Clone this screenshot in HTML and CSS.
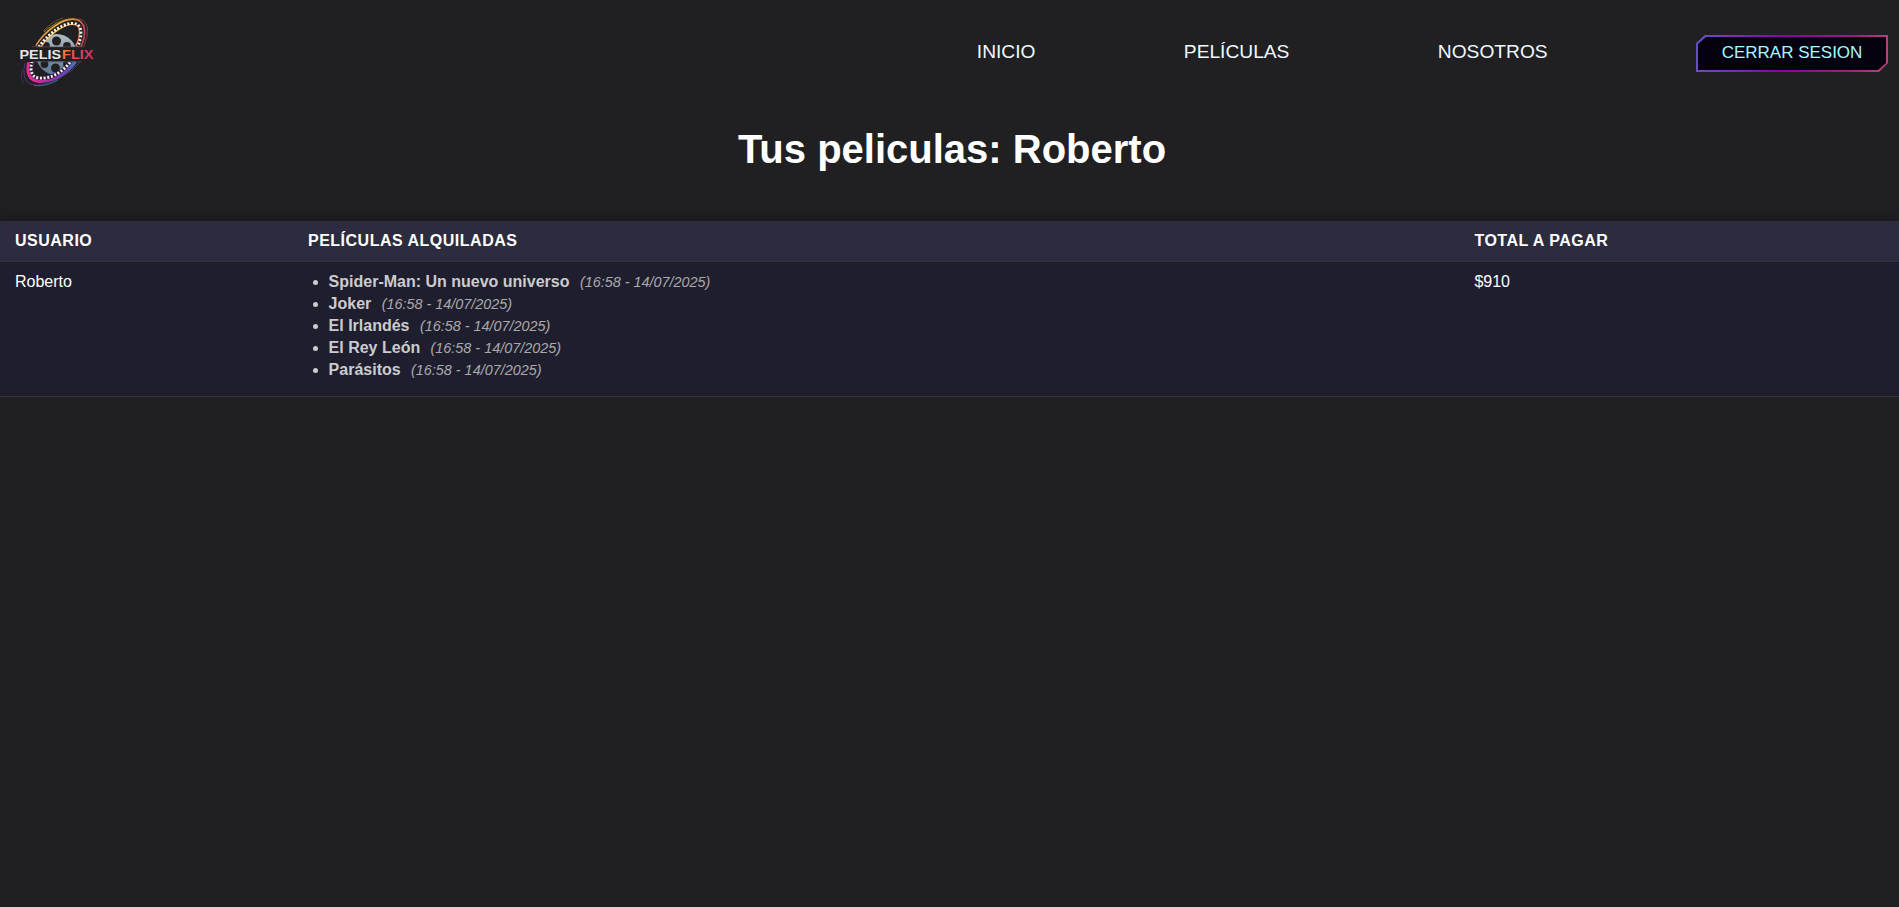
FILE: index.html
```html
<!DOCTYPE html>
<html lang="es">
<head>
<meta charset="utf-8">
<title>Pelisflix</title>
<link rel="stylesheet" href="styles.css">
</head>
<body>
<header class="header">
  <a class="logo" href="#">
    <svg class="logo-img" viewBox="0 0 100 85" width="100" height="85">
      <defs>
        <linearGradient id="top" gradientUnits="userSpaceOnUse" x1="24" y1="30" x2="75" y2="34"><stop offset="0" stop-color="#e58a62"/><stop offset=".4" stop-color="#f5c13a"/><stop offset=".8" stop-color="#f2803a"/><stop offset="1" stop-color="#e0407a"/></linearGradient>
        <linearGradient id="bot" gradientUnits="userSpaceOnUse" x1="18" y1="60" x2="72" y2="55"><stop offset="0" stop-color="#e62d92"/><stop offset=".45" stop-color="#8d2fae"/><stop offset=".75" stop-color="#5a50b4"/><stop offset="1" stop-color="#2f9fc4"/></linearGradient>
        <linearGradient id="flix" x1="0" y1="0" x2="1" y2="0.300"><stop offset="0" stop-color="#f4983c"/><stop offset=".45" stop-color="#ec4f58"/><stop offset="1" stop-color="#d92a62"/></linearGradient>
        <linearGradient id="metal" x1="0" y1="0" x2="0" y2="1"><stop offset="0" stop-color="#b3bac0"/><stop offset=".5" stop-color="#8496a8"/><stop offset="1" stop-color="#58759c"/></linearGradient>
        <clipPath id="upper"><path d="M0 0H100V36.500H0z"/></clipPath>
        <clipPath id="lower"><path d="M0 52H100V85H0z"/></clipPath>
      </defs>
      <circle cx="46.500" cy="44.500" r="20.500" fill="url(#metal)"/>
      <g fill="#202022"><circle cx="46.500" cy="31" r="4.500"/><circle cx="36" cy="36" r="3.900"/><circle cx="57" cy="36" r="3.900"/><circle cx="34.500" cy="54" r="3.900"/><circle cx="45.500" cy="58" r="4.500"/><circle cx="57" cy="54" r="3.900"/></g>
      <g clip-path="url(#upper)" fill="none">
        <path d="M28 37C37 22 56 9 67 12.500C74 15.500 73 27 68 37" stroke="url(#top)" stroke-width="6.500"/>
        <path d="M28 37C37 22 56 9 67 12.500C74 15.500 73 27 68 37" stroke="#29221f" stroke-width="3.600"/>
        <path d="M29 37C38 23 56 10.500 66.500 14C72.500 17 72 27 67.500 37" stroke="#fff8ea" stroke-width="2.800" stroke-dasharray="2 1.700"/>
        <path d="M34 22C46 11 62 5 71 11.500" stroke="#c89a30" stroke-width=".8"/>
        <path d="M33 21C40 14 46 10 53 8" stroke="#77692e" stroke-width=".7"/>
        <path d="M66 9Q75 8 77.500 18Q78 27 74 36" stroke="#a4553a" stroke-width=".7"/>
        <path d="M74 14Q77 23 72 35" stroke="#9b3760" stroke-width=".8"/>
      </g>
      <g clip-path="url(#lower)" fill="none">
        <path d="M21 51C18 61 20 69 28 69.500C40 71 54 64 64 51" stroke="url(#bot)" stroke-width="6.500"/>
        <path d="M22 51C19.500 60 21.500 67 28.500 68C40 69.500 52 63 61 51" stroke="#29202f" stroke-width="3.600"/>
        <path d="M22 51C19.500 60 21.500 67 28.500 68C40 69.500 52 63 61 51" stroke="#fff4fb" stroke-width="2.800" stroke-dasharray="2 1.700"/>
        <path d="M15 53Q11 68 20 74Q33 78 50 68Q63 61 70 52" stroke="#5b3f87" stroke-width=".8"/>
        <path d="M12 60Q10 69 14 73" stroke="#583472" stroke-width=".7"/>
        <path d="M24 75.500Q36 77 48 70" stroke="#2e7f9e" stroke-width=".8"/>
      </g>
      <path d="M6 37H87V51.500H6z" fill="#202022"/>
      <path d="M22 36.800H74M22 51.800H72" stroke="#615469" stroke-width=".6"/>
      <text class="brand" x="9.500" y="49" textLength="41.500" lengthAdjust="spacingAndGlyphs" fill="#e6e6ea">PELIS</text>
      <text class="brand" x="52" y="49" textLength="31.500" lengthAdjust="spacingAndGlyphs" fill="url(#flix)">FLIX</text>
    </svg>
  </a>
  <nav class="nav">
    <a class="nav-link" href="#">INICIO</a>
    <a class="nav-link" href="#">PELÍCULAS</a>
    <a class="nav-link" href="#">NOSOTROS</a>
    <button class="logout"><span class="logout-text">CERRAR SESION</span></button>
  </nav>
</header>
<main>
  <h1 class="title">Tus peliculas: Roberto</h1>
  <table class="rentals">
    <colgroup><col class="col-user"><col class="col-films"><col></colgroup>
    <thead><tr><th>USUARIO</th><th>PELÍCULAS ALQUILADAS</th><th>TOTAL A PAGAR</th></tr></thead>
    <tbody><tr>
      <td>Roberto</td>
      <td><ul class="films">
        <li><strong>Spider-Man: Un nuevo universo</strong><em class="date">(16:58 - 14/07/2025)</em></li>
        <li><strong>Joker</strong><em class="date">(16:58 - 14/07/2025)</em></li>
        <li><strong>El Irlandés</strong><em class="date">(16:58 - 14/07/2025)</em></li>
        <li><strong>El Rey León</strong><em class="date">(16:58 - 14/07/2025)</em></li>
        <li><strong>Parásitos</strong><em class="date">(16:58 - 14/07/2025)</em></li>
      </ul></td>
      <td>$910</td>
    </tr></tbody>
  </table>
</main>
</body>
</html>
```
FILE: styles.css
```css
* { box-sizing: border-box; }
body {
  margin: 0;
  background: #202022;
  color: #fff;
  font-family: "Liberation Sans", Arial, sans-serif;
}
.header {
  display: flex;
  align-items: center;
  justify-content: space-between;
  height: 105px;
  padding: 0 11px 0 10px;
}
.logo-img { display: block; }
.brand { font: bold 13px "Liberation Sans", Arial, sans-serif; }
.nav { display: flex; align-items: center; gap: 148.4px; padding-top: 2px; }
.nav-link {
  color: #f0f8ff;
  font-size: 19.2px;
  line-height: 22px;
  text-decoration: none;
  margin-top: -3px;
}
.logout {
  width: 192px;
  height: 37px;
  padding: 2px;
  border: 0;
  background: linear-gradient(100deg, #5a50c4 0%, #6c4cc0 4%, #8b00a8 45%, #97207f 80%, #b5487e 100%);
  clip-path: polygon(9px 0, 100% 0, 100% 28px, 183px 100%, 0 100%, 0 8px);
  font: 17px "Liberation Sans", Arial, sans-serif;
  color: #a4fbff;
}
.logout-text {
  display: flex;
  align-items: center;
  justify-content: center;
  height: 33px;
  padding-bottom: 1px;
  background: #05010f;
  clip-path: polygon(8px 0, 100% 0, 100% 26px, 180px 100%, 0 100%, 0 7px);
}
.title {
  margin: 21px 0 49px;
  padding-left: 5px;
  font-size: 40px;
  line-height: 46px;
  text-align: center;
}
.rentals {
  width: 100%;
  table-layout: fixed;
  border-spacing: 0;
  background: #1f1e2e;
  box-shadow: 0 2px 15px rgba(0, 0, 0, .5);
}
.col-user { width: 293px; }
.col-films { width: 1166.4px; }
.rentals th, .rentals td {
  text-align: left;
  vertical-align: top;
  font-size: 16px;
  line-height: 18px;
  border-bottom: 1px solid #333;
}
.rentals th { padding: 11px 15px; background: #2c2c3e; letter-spacing: .5px; }
.rentals td { padding: 11px 15px 13px; }
.films { margin: 0; padding-left: 20.6px; color: #ccc; }
.films li { height: 22px; }
.date { margin-left: 10.4px; font-size: 14.4px; color: #aaa; }
```
